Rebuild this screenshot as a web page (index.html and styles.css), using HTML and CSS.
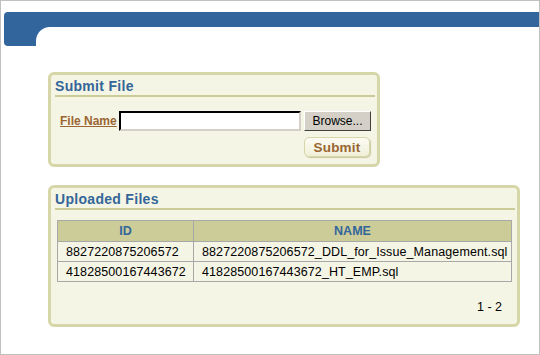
FILE: index.html
```html
<!DOCTYPE html>
<html lang="en">
<head>
  <meta charset="UTF-8">
  <title>Submit File</title>
  <link rel="stylesheet" href="styles.css">
</head>
<body>
  <div class="frame">
    <div class="banner">
      <div class="banner-tab"></div>
      <div class="banner-right">
        <div class="banner-bar"></div>
        <div class="banner-notch"></div>
      </div>
    </div>

    <div class="content">
      <div class="region region-submit">
        <h2 class="region-title">Submit File</h2>
        <form class="upload-form">
          <div class="form-row">
            <label class="field-label" for="file">File Name</label>
            <input type="text" id="file" class="file-input">
            <button type="button" class="browse-btn">Browse...</button>
          </div>
          <div class="form-actions">
            <button type="button" class="submit-btn">Submit</button>
          </div>
        </form>
      </div>

      <div class="region region-files">
        <h2 class="region-title">Uploaded Files</h2>
        <table class="files-table">
          <thead>
            <tr>
              <th class="col-id">ID</th>
              <th>NAME</th>
            </tr>
          </thead>
          <tbody>
            <tr>
              <td>8827220875206572</td>
              <td>8827220875206572_DDL_for_Issue_Management.sql</td>
            </tr>
            <tr>
              <td>41828500167443672</td>
              <td>41828500167443672_HT_EMP.sql</td>
            </tr>
          </tbody>
        </table>
        <div class="pagination">1 - 2</div>
      </div>
    </div>
  </div>
</body>
</html>
```

FILE: styles.css
```css
* {
  margin: 0;
  padding: 0;
  box-sizing: border-box;
}

body {
  font-family: 'Liberation Sans', Arial, sans-serif;
  font-size: 12px;
  background-color: #fff;
  color: #000;
}

.frame {
  width: 540px;
  height: 355px;
  border: 1px solid #c0c0c0;
  overflow: hidden;
}

/* top banner */
.banner {
  display: flex;
  margin: 11px 0 0 3px;
  height: 34px;
}

.banner-tab {
  width: 32px;
  height: 34px;
  background-color: #31659c;
  border-radius: 4px 0 0 4px;
}

.banner-right {
  flex: 1;
}

.banner-bar {
  height: 15px;
  background-color: #31659c;
}

.banner-notch {
  width: 14px;
  height: 14px;
  background: radial-gradient(circle at 100% 100%, transparent 13.5px, #31659c 14.5px);
}

/* regions */
.content {
  padding: 26px 0 0 47px;
}

.region {
  background-color: #f5f5e5;
  border: 3px solid #d6d6a8;
  border-radius: 6px;
}

.region-submit {
  width: 332px;
  height: 95px;
}

.region-files {
  width: 472px;
  height: 142px;
  margin-top: 18px;
}

.region-title {
  font-size: 14px;
  font-weight: bold;
  letter-spacing: 0.3px;
  color: #336699;
  margin: 0 2px 0 4px;
  padding-top: 3px;
  height: 22px;
  line-height: 16px;
  border-bottom: 2px solid #cccc99;
}

/* submit form */
.upload-form {
  padding: 14px 0 0 9px;
}

.form-row {
  display: flex;
  align-items: center;
  height: 20px;
}

.field-label {
  font-size: 12px;
  font-weight: bold;
  color: #996633;
  text-decoration: underline;
  width: 59px;
}

.file-input {
  width: 182px;
  height: 20px;
  border: 2px inset #d4d0c8;
  border-top-color: #505050;
  border-left-color: #505050;
  background-color: #fff;
}

.browse-btn {
  margin-left: 3px;
  width: 67px;
  height: 20px;
  background-color: #d4d0c8;
  border: 1px solid;
  border-color: #fff #404040 #404040 #fff;
  font-family: 'Liberation Sans', Arial, sans-serif;
  font-size: 12px;
  color: #000;
}

.form-actions {
  display: flex;
  justify-content: flex-end;
  padding: 6px 7px 0 0;
}

.submit-btn {
  width: 66px;
  height: 20px;
  border: 1px solid #d6d6a8;
  border-radius: 5px;
  background: linear-gradient(#fbfbf3, #f0f0d8);
  box-shadow: 1px 1px 1px #c8c8a0;
  font-family: 'Liberation Sans', Arial, sans-serif;
  font-size: 13.5px;
  font-weight: bold;
  letter-spacing: 0.2px;
  color: #996633;
}

/* files table */
.files-table {
  margin: 10px 0 0 6px;
  width: 455px;
  border-collapse: collapse;
}

.files-table th,
.files-table td {
  border: 1px solid #a8a8a8;
  height: 20px;
}

.files-table th {
  background-color: #cccc99;
  color: #336699;
  font-size: 12.5px;
  font-weight: bold;
  height: 21px;
}

.files-table .col-id {
  width: 136px;
}

.files-table td {
  padding-left: 8px;
  font-size: 12.5px;
  letter-spacing: 0.1px;
}

.pagination {
  text-align: right;
  padding: 18px 15px 0 0;
  font-size: 12.5px;
}
```
